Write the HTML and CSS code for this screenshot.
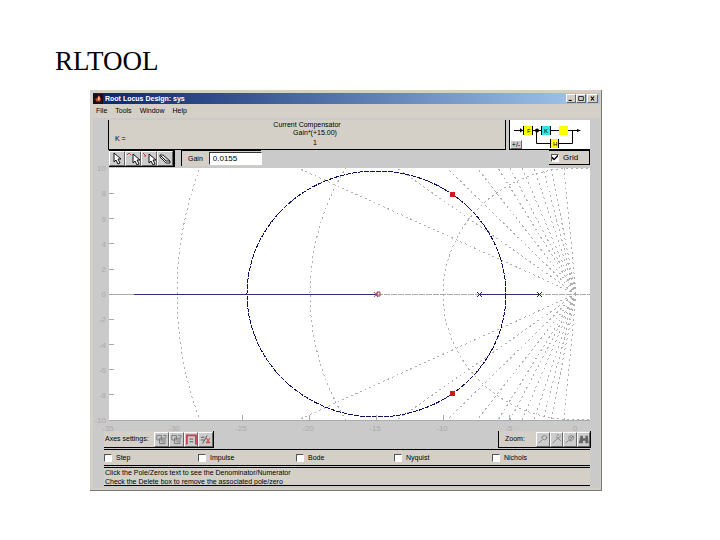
FILE: index.html
```html
<!DOCTYPE html>
<html lang="en">
<head>
<meta charset="utf-8">
<title>RLTOOL</title>
<link rel="stylesheet" href="styles.css">
</head>
<body>
<h1>RLTOOL</h1>
<main class="window">
  <header class="titlebar">
    <svg class="logo" viewBox="0 0 10 10"><path fill="#180c18" d="M0 0h10v10H0z"/><path fill="#d04030" d="M2 5l2-1 2-3 2 4-1 3-2-1-1 1z"/><path fill="#ffb080" d="M5 3l1-1 1 3-2 2z"/></svg>
    <span class="title">Root Locus Design: sys</span>
    <button aria-label="Minimize"><svg viewBox="0 0 10 9"><path d="M2 7h4" stroke="#000" stroke-width="1.5"/></svg></button>
    <button aria-label="Maximize"><svg viewBox="0 0 10 9"><path d="M2 2h6v5H2z" fill="none" stroke="#000"/></svg></button>
    <button class="close" aria-label="Close"><svg viewBox="0 0 10 9"><path d="M3 2l4 5M7 2L3 7" stroke="#000" stroke-width="1.3"/></svg></button>
  </header>
  <nav class="menu"><a href="#">File</a><a href="#">Tools</a><a href="#">Window</a><a href="#">Help</a></nav>
  <div class="figure">
    <section class="top">
      <div class="compensator">
        <span class="k">K =</span>
        <p>Current Compensator</p><p class="value">Gain*(+15.00)</p><p class="value den">1</p>
      </div>
      <div class="diagram">
        <svg viewBox="0 0 80 29"><g fill="none" stroke="#000"><path d="M4 10.500h66M26.500 10v13.500h36V10"/><path d="M13.500 6v9M22.500 6v9M31.500 6v9M40.500 6v9M40.500 19v9M48.500 19v9"/></g><path fill="#ff0" d="M14 6h8v9h-8zM49 6h9v9h-9zM41 19h7v9h-7z"/><path fill="#2ee6ee" d="M32 6h8v9h-8z"/><circle cx="27" cy="10.500" r="2"/><path d="M10 8l3 2.500-3 2zM67 9l4 1.500-4 1.500z"/><g class="block"><text x="17" y="13">F</text><text x="34" y="13">K</text><text x="43" y="26">H</text></g></svg>
        <button>+/-</button>
      </div>
    </section>
    <section class="tools">
      <div class="modes">
        <button aria-label="Select"><svg viewBox="0 0 14 13"><use href="#arrow"/></svg></button>
        <button aria-label="Add pole"><svg viewBox="0 0 14 13"><path d="M1 3l2-2 2 2" stroke="#c44" fill="none"/><use href="#arrow" x="3" y="1"/></svg></button>
        <button aria-label="Add zero"><svg viewBox="0 0 14 13"><path d="M1 1l3 3M2 4h2" stroke="#c44" fill="none"/><use href="#arrow" x="3" y="1"/></svg></button>
        <button aria-label="Erase"><svg viewBox="0 0 14 13"><path d="M2 3h3l7 6v2H8L2 5zM2 3l6 6h4" fill="#eee" stroke="#222"/></svg></button>
      </div>
      <div class="gain"><label for="gain">Gain</label><input id="gain" value="0.0155"></div>
      <label class="grid"><input type="checkbox" checked>Grid</label>
    </section>
    <svg class="plot" viewBox="0 0 507 265" role="img" aria-label="Root locus">
      <defs>
        <clipPath id="area"><path d="M16 2h481v252H16z"/></clipPath>
        <path id="arrow" d="M4 1v9l2-2 2 4 2-1-2-4h3z" fill="#fff" stroke="#111"/>
      </defs>
      <path fill="#fff" d="M16 2h481v252H16z"/>
      <g clip-path="url(#area)" fill="none">
        <g class="guides">
          <ellipse cx="483" cy="128" rx="133" ry="126"/><ellipse cx="483" cy="128" rx="266" ry="252"/><ellipse cx="483" cy="128" rx="399" ry="378"/>
          <path d="M483 128L205 2M483 128L304 2M483 128L354 2M483 128L384 2M483 128L405 2M483 128L417 2M483 128L429 2M483 128L441 2M483 128L450 2M483 128L458 2M483 128L471 2"/>
          <path d="M483 128L205 254M483 128L304 254M483 128L354 254M483 128L384 254M483 128L405 254M483 128L417 254M483 128L429 254M483 128L441 254M483 128L450 254M483 128L458 254M483 128L471 254"/>
        </g>
        <path class="axis" d="M16 128.500h25"/>
        <path class="axis" d="M284 128.500h213" stroke-dasharray="6 1"/>
        <ellipse class="locus" cx="283.500" cy="128" rx="129.500" ry="123"/>
        <path class="branch" d="M41 128.500h243M387 128.500h60"/>
        <path class="cross" d="M384 126l5 5M389 126l-5 5M444 126l5 5M449 126l-5 5"/>
        <path d="M281 126l4 5M285 126l-4 5M284 126h3v4h-3z" stroke="#a04050"/>
      </g>
      <path fill="#c81e1a" d="M357 26h5v5h-5zM357 225h5v5h-5z"/>
      <path class="axis" d="M16 254.500h481M16 27.500h5M16 52.500h5M16 77.500h5M16 103.500h5M16 153.500h5M16 178.500h5M16 203.500h5M16 228.500h5M149.500 254v-5M216.500 254v-5M283.500 254v-5M350.500 254v-5M416.500 254v-5"/>
      <g class="ticks end"><text x="13" y="5">10</text><text x="13" y="30">8</text><text x="13" y="56">6</text><text x="13" y="81">4</text><text x="13" y="106">2</text><text x="13" y="131">0</text><text x="13" y="156">-2</text><text x="13" y="182">-4</text><text x="13" y="207">-6</text><text x="13" y="232">-8</text><text x="13" y="257">-10</text></g>
      <g class="ticks mid"><text x="15" y="265">-35</text><text x="81" y="265">-30</text><text x="148" y="265">-25</text><text x="215" y="265">-20</text><text x="282" y="265">-15</text><text x="349" y="265">-10</text><text x="416" y="265">-5</text><text x="482" y="265">0</text></g>
    </svg>
    <section class="settings">
      <div class="axes"><span>Axes settings:</span>
        <button aria-label="Axes left"><svg viewBox="0 0 14 13"><path d="M2 2h5v5H2zM5 5h6v6H5zM7 7h3M7 9h3M9 2h3v3" fill="none" stroke="#777"/></svg></button>
        <button aria-label="Axes right"><svg viewBox="0 0 14 13"><path d="M2 2h5v5H2zM5 5h6v6H5zM7 7h3M7 9h3M9 2h3v3" fill="none" stroke="#777"/></svg></button>
        <button aria-label="Square axes"><svg viewBox="0 0 14 13"><path d="M2 12V2h10v10" fill="none" stroke="#c84050" stroke-width="2"/><path d="M5 6h4M5 9h4" stroke="#555"/></svg></button>
        <button aria-label="Equal axes"><svg viewBox="0 0 14 13"><path d="M2 4h4M2 7h4M9 2L4 11" stroke="#555"/><path d="M8 5l4 5M12 5l-4 5M8 10h4" stroke="#c22" fill="none"/></svg></button>
      </div>
      <div class="zoom"><span>Zoom:</span>
        <button aria-label="Zoom in"><svg viewBox="0 0 14 13"><path d="M6 7l-4 4M6 3q3-3 6 0q0 4-3 4q-4-1-3-4" fill="none" stroke="#777"/></svg></button>
        <button aria-label="Zoom X"><svg viewBox="0 0 14 13"><path d="M6 7l-4 4M6 3l6 5M12 2L6 7M7 1h3" fill="none" stroke="#777"/></svg></button>
        <button aria-label="Zoom Y"><svg viewBox="0 0 14 13"><path d="M6 7l-4 4M6 3q3-3 6 0q0 4-3 5q-4-1-3-5M7 3l2 2 2-3M9 5L7 9" fill="none" stroke="#777"/></svg></button>
        <button aria-label="Full view"><svg viewBox="0 0 14 13"><path d="M3 2h3v3h3V2h3l1 9H9V8H6v3H1z" fill="#666"/></svg></button>
      </div>
    </section>
    <section class="responses">
      <label><input type="checkbox">Step</label><label><input type="checkbox">Impulse</label><label><input type="checkbox">Bode</label><label><input type="checkbox">Nyquist</label><label><input type="checkbox">Nichols</label>
    </section>
    <footer><p>Click the Pole/Zeros text to see the Denominator/Numerator</p><p>Check the Delete box to remove the associated pole/zero</p></footer>
  </div>
</main>
</body>
</html>
```
FILE: styles.css
```css
* { box-sizing: border-box; }
body { margin: 0; padding: 44px 118px 0 90px; background: #fff; color: #000; font: 7px/8px "Liberation Sans", Arial, sans-serif; }
h1 { margin: 0 0 11px -35px; font: 27px/35px "Liberation Serif", "Times New Roman", serif; }
p { margin: 0; }
svg { display: block; }
button { margin: 0; padding: 0; border: 1px solid; border-color: #fff #666 #666 #fff; background: #ccc; color: #000; font: inherit; }
.window { padding: 3px 1px 2px 3px; background: #d4d0c8; border-right: 1px solid #777; border-bottom: 1px solid #777; }
.titlebar { display: flex; align-items: center; height: 11px; padding-right: 2px; background: linear-gradient(90deg, #0a246a, #a6caf0); }
.logo { width: 10px; height: 10px; margin-right: 2px; }
.title { flex: 1; color: #fff; font-weight: bold; }
.titlebar button { width: 10px; height: 9px; background: #d4d0c8; }
.titlebar .close { width: 11px; margin-left: 1px; }
.titlebar button svg { width: 100%; height: 100%; }
.menu { display: flex; gap: 8px; height: 14px; padding: 3px 3px 0; }
.menu a { color: #000; text-decoration: none; }
.figure { padding: 2px 0; background: #cacaca; }
.top { display: flex; gap: 3px; padding: 0 10px 0 15px; }
.compensator { position: relative; flex: 1; height: 30px; padding-top: 1px; text-align: center; background: #d4d0c8; border: solid #000; border-width: 0 1px 1px; }
.value { padding-left: 16px; }
.compensator .den { margin-top: 2px; }
.k { position: absolute; left: 6px; top: 15px; }
.diagram { position: relative; width: 81px; border-left: 1px solid #000; border-bottom: 1px solid #000; background: #fff; }
.diagram svg { width: 80px; height: 29px; }
.diagram button { position: absolute; left: 0; bottom: 0; width: 12px; height: 9px; line-height: 7px; }
.block { font-size: 6px; }
.tools { display: flex; align-items: flex-start; height: 16px; padding: 0 10px 0 16px; }
.modes { display: flex; height: 17px; padding: 1px 2px 1px 0; background: #000; }
.modes button, .axes button, .zoom button { width: 16px; height: 15px; }
.modes svg, .axes svg, .zoom svg { width: 14px; height: 13px; }
.gain { display: flex; align-items: center; gap: 6px; width: 80px; height: 16px; margin-left: 6px; padding-left: 6px; background: #d4d0c8; border-left: 1px solid #000; border-top: 1px solid #000; }
.gain input { width: 53px; height: 13px; padding: 0 3px; border: 1px solid #333; border-right-color: #fff; border-bottom-color: #fff; background: #fff; font: 8px/9px "Liberation Sans", Arial, sans-serif; }
.grid { display: flex; align-items: center; gap: 4px; width: 41px; height: 15px; margin-left: auto; padding-left: 2px; background: #d4d0c8; border: 1px solid #000; border-left: 0; font-size: 8px; }
input[type="checkbox"] { appearance: none; width: 8px; height: 8px; margin: 0; border: 1px solid #555; border-right-color: #fff; border-bottom-color: #fff; background: #fff; }
input[type="checkbox"]:checked::before { content: ""; display: block; width: 6px; height: 6px; background: #000; clip-path: polygon(0 35%, 35% 65%, 100% 0, 100% 35%, 35% 100%, 0 70%); }
.plot { width: 100%; height: auto; overflow: visible; }
.guides { stroke: #b0b0b0; stroke-dasharray: 2 3; shape-rendering: crispEdges; }
.axis { fill: none; stroke: #aaa; shape-rendering: crispEdges; }
.locus { stroke: #101060; stroke-dasharray: 5 1; shape-rendering: crispEdges; }
.branch { stroke: #303070; stroke-width: 1; }
.cross { stroke: #202060; }
.ticks { fill: #aaa; font-size: 8px; }
.end { text-anchor: end; }
.mid { text-anchor: middle; }
.settings { display: flex; justify-content: space-between; height: 17px; padding: 0 9px 0 11px; }
.axes, .zoom { display: flex; align-items: center; background: #d4d0c8; border-bottom: 1px solid #000; border-right: 1px solid #000; }
.axes { width: 110px; }
.axes span { width: 50px; padding-left: 1px; }
.zoom { width: 93px; border-left: 1px solid #000; }
.zoom span { width: 37px; padding-left: 6px; }
.axes button, .zoom button { flex: 1; }
.axes svg, .zoom svg { width: 100%; }
.responses { display: grid; grid-template-columns: 94fr repeat(4, 98fr); height: 17px; margin: 1px 10px 1px 11px; background: #d4d0c8; border-top: 1px solid #000; border-bottom: 1px solid #000; }
.responses label { display: flex; align-items: center; gap: 4px; }
footer { height: 19px; margin: 0 10px 0 11px; padding-left: 1px; line-height: 9px; background: #d4d0c8; border-top: 1px solid #000; border-bottom: 1px solid #000; }
```
